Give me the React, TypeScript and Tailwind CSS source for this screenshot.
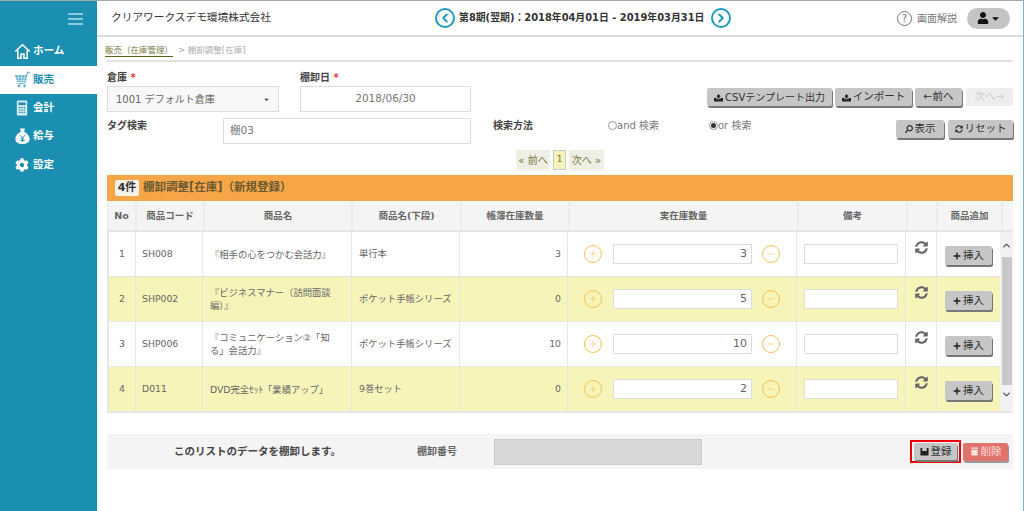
import { ChevronDown, ChevronLeft, ChevronRight, ChevronUp, Minus, Plus } from "lucide-react";
import { FaCaretDown, FaCog, FaPlus, FaSearch, FaSyncAlt, FaUser } from "react-icons/fa";
import { ReactNode } from "react";

const rows = [
  { no: 1, code: "SH008", name: "『相手の心をつかむ会話力』", sub: "単行本", book: 3, real: 3 },
  { no: 2, code: "SHP002", name: "『ビジネスマナー（訪問面談編）』", sub: "ポケット手帳シリーズ", book: 0, real: 5 },
  { no: 3, code: "SHP006", name: "『コミュニケーション②「知る」会話力』", sub: "ポケット手帳シリーズ", book: 10, real: 10 },
  { no: 4, code: "D011", name: "DVD完全ｾｯﾄ「業績アップ」", sub: "9巻セット", book: 0, real: 2 },
];

const headers = ["No", "商品コード", "商品名", "商品名(下段)", "帳簿在庫数量", "実在庫数量", "備考", "", "商品追加"];

function HomeIcon() {
  return (
    <svg viewBox="0 0 20 20" className="h-[17px] w-[17px]" fill="none" stroke="white" strokeWidth="1.8">
      <path d="M1.5 10 10 2l8.500 8" />
      <path d="M4.500 8.500V18h3.800v-5h3.400v5h3.800V8.500" />
    </svg>
  );
}

function CartIcon() {
  return (
    <svg viewBox="0 0 20 20" className="h-[17px] w-[17px]" fill="#58abc6">
      <path d="M1 5h14.500l-1.500 8H4z" />
      <path d="M5 5l1 8M9 5v8M12.500 5l-1 8M2 8h13M3 11h11" stroke="white" strokeWidth="0.700" />
      <path d="M15 5l1-3.500h3" fill="none" stroke="#58abc6" strokeWidth="1.200" />
      <path d="M5 14.500h8.500" fill="none" stroke="#58abc6" strokeWidth="1.200" />
      <circle cx="6" cy="17.500" r="1.500" />
      <circle cx="12.500" cy="17.500" r="1.500" />
    </svg>
  );
}

function CalcIcon() {
  return (
    <svg viewBox="0 0 14 20" className="h-[16px] w-[12px]">
      <rect x="0.500" y="0.500" width="13" height="19" rx="1.500" fill="#d7edf3" />
      <rect x="2.500" y="3" width="9" height="3.500" fill="#1a8fb1" />
      <path d="M3 9.500h2M6 9.500h2M9 9.500h2M3 12.500h2M6 12.500h2M9 12.500h2M3 15.500h2M6 15.500h2M9 15.500h2" stroke="#1a8fb1" strokeWidth="1.500" />
    </svg>
  );
}

function BagIcon() {
  return (
    <svg viewBox="0 0 18 20" className="h-[18px] w-[15px]">
      <path d="M6 1h6L10.800 5c3.700 1.500 6.700 5 6.700 8.500 0 4-3.500 6-8.500 6s-8.500-2-8.500-6C.5 10 3.500 6.500 7.200 5z" fill="white" />
      <path d="M6 9l3 3.500L12 9M9 12.500V17M6.500 13.500h5M6.500 15.500h5" stroke="#1a8fb1" strokeWidth="1.100" fill="none" />
    </svg>
  );
}

function ImportIcon() {
  return (
    <svg viewBox="0 0 10 10" className="h-[9px] w-[9px]" fill="#222">
      <path d="M5 1 7.500 4H6.200v2H3.800V4H2.500z" />
      <path d="M0 5.500h2.800v1.500h4.400V5.500H10V9.500H0z" />
    </svg>
  );
}

function FloppyIcon() {
  return (
    <svg viewBox="0 0 10 10" className="h-[9px] w-[9px]" fill="#222">
      <path d="M.5 1h2v3.500h5V1h2v8.500h-9z" />
    </svg>
  );
}

function BinIcon() {
  return (
    <svg viewBox="0 0 10 10" className="h-[9px] w-[9px]" fill="#fbe6e4">
      <path d="M1 .5h8v1.500H1zM1.500 3h7v6.500h-7z" />
    </svg>
  );
}

function NavItem({ icon, label, active }: { icon: ReactNode; label: string; active?: boolean }) {
  return (
    <div className={active ? "flex h-[28px] items-center bg-white pl-[11px] text-[#1a8fb1]" : "flex h-[28.500px] items-center pl-[11px] text-white"}>
      <span className="flex w-[22px] justify-center">{icon}</span>
      <span className="text-[10.500px] font-bold">{label}</span>
    </div>
  );
}

function GrayButton({ children, className }: { children: ReactNode; className: string }) {
  return (
    <button className={`flex items-center justify-center gap-[2px] rounded-[2px] bg-[#c6c6c6] text-[10.500px] text-[#333] shadow-[1px_2px_0_#777] ${className}`}>
      {children}
    </button>
  );
}

function RoundButton({ children }: { children: ReactNode }) {
  return (
    <span className="flex h-[18px] w-[18px] shrink-0 items-center justify-center rounded-full border-[1.500px] border-[#fbbf50] text-[#fbbf50]">
      {children}
    </span>
  );
}

function Scrollbar() {
  return (
    <div className="flex w-[13px] flex-col items-center bg-[#f1f1f1] text-[#555]">
      <ChevronUp size={11} strokeWidth={3} className="mt-[8px] shrink-0" />
      <div className="mt-[6px] h-[128px] w-[10px] bg-[#c8c8c8]" />
      <ChevronDown size={11} strokeWidth={3} className="mt-[4px] shrink-0" />
    </div>
  );
}

export default function App() {
  return (
    <div className="flex h-[511px] w-[1024px] overflow-hidden border-t border-t-[#a3a8aa] border-r border-r-[#7ab3d8] bg-white font-['DejaVu_Sans','Noto_Sans_CJK_JP',sans-serif] text-[#555]">
      <aside className="w-[97px] shrink-0 bg-[#1a8fb1]">
        <div className="flex h-[36px] items-start justify-end pr-[14px] pt-[12px]">
          <div className="flex w-[15px] flex-col gap-[3px]">
            <div className="h-[2px] bg-[#8ccbdc]" />
            <div className="h-[2px] bg-[#8ccbdc]" />
            <div className="h-[2px] bg-[#8ccbdc]" />
          </div>
        </div>
        <NavItem icon={<HomeIcon />} label="ホーム" />
        <NavItem icon={<CartIcon />} label="販売" active />
        <NavItem icon={<CalcIcon />} label="会計" />
        <NavItem icon={<BagIcon />} label="給与" />
        <NavItem icon={<FaCog size={14} />} label="設定" />
      </aside>

      <main className="flex min-w-0 flex-1 flex-col">
        <header className="flex h-[36px] shrink-0 items-center border-b-2 border-[#dcdcdc] pl-[14px] pr-[13px]">
          <div className="w-[324px] text-[10.700px] text-[#333]">クリアワークスデモ環境株式会社</div>
          <span className="flex h-[20px] w-[20px] items-center justify-center rounded-full border-2 border-[#1f9cba] text-[#1f9cba]">
            <ChevronLeft size={14} strokeWidth={3.500} />
          </span>
          <div className="ml-[4px] w-[252px] whitespace-nowrap text-[9.900px] font-bold text-[#333]">
            第8期(翌期)：2018年04月01日 - 2019年03月31日
          </div>
          <span className="flex h-[20px] w-[20px] items-center justify-center rounded-full border-2 border-[#1f9cba] text-[#1f9cba]">
            <ChevronRight size={14} strokeWidth={3.500} />
          </span>
          <span className="ml-auto flex h-[15px] w-[15px] items-center justify-center rounded-full border border-[#777] text-[10px] text-[#777]">?</span>
          <span className="ml-[5px] text-[10px] text-[#777]">画面解説</span>
          <span className="ml-[10px] flex h-[21px] w-[43px] items-center justify-center rounded-full bg-[#c4c4c4] text-[#111]">
            <FaUser size={12} />
            <FaCaretDown size={11} className="ml-[1px]" />
          </span>
        </header>

        <div className="flex flex-1 flex-col px-[10px]">
          <div className="flex h-[25px] shrink-0 items-center border-b-2 border-[#e2e2e2] text-[8.500px] text-[#aaa]">
            <span className="-ml-[2px] mt-[4px] border-b border-[#5e5e22] text-[#77773a]">販売（在庫管理）</span>
            <span className="ml-[5px] mt-[3px]">&gt; 棚卸調整[在庫]</span>
          </div>

          <div className="mt-[8px] flex h-[42px] shrink-0">
            <div className="w-[172px]">
              <div className="h-[16px] text-[10px] font-bold text-[#444]">
                倉庫 <span className="text-[#e23a2e]">*</span>
              </div>
              <div className="flex h-[26px] items-center justify-between border border-[#ddd] bg-[#f8f8f8] pl-[8px] pr-[8px] text-[10px] text-[#666]">
                1001 デフォルト倉庫
                <FaCaretDown size={7} className="text-[#333]" />
              </div>
            </div>
            <div className="ml-[21px] w-[171px]">
              <div className="h-[16px] text-[10px] font-bold text-[#444]">
                棚卸日 <span className="text-[#e23a2e]">*</span>
              </div>
              <div className="flex h-[26px] items-center justify-center border border-[#ddd] text-[10.500px] text-[#777]">2018/06/30</div>
            </div>
            <div className="ml-auto mt-[18px] flex h-[18px] gap-[3px]">
              <GrayButton className="w-[125px] text-[10px]"><ImportIcon />CSVテンプレート出力</GrayButton>
              <GrayButton className="w-[77px]"><ImportIcon />インポート</GrayButton>
              <GrayButton className="w-[47px]">←前へ</GrayButton>
              <button className="ml-[1px] w-[47px] rounded-[2px] bg-[#eee] text-[10.500px] text-[#ccc]">次へ→</button>
            </div>
          </div>

          <div className="mt-[6px] flex h-[26px] shrink-0">
            <div className="w-[116px] text-[10px] font-bold text-[#444]">タグ検索</div>
            <div className="flex w-[248px] items-center border border-[#ddd] pl-[6px] text-[10.500px] text-[#777]">棚03</div>
            <div className="ml-[22px] w-[115px] text-[10px] font-bold text-[#444]">検索方法</div>
            <div className="flex w-[101px] items-start text-[10px] text-[#777]">
              <span className="mt-[3px] h-[9px] w-[9px] rounded-full border border-[#999]" />
              and 検索
            </div>
            <div className="flex items-start text-[10px] text-[#777]">
              <span className="mt-[3px] flex h-[9px] w-[9px] items-center justify-center rounded-full border border-[#999]">
                <span className="h-[5px] w-[5px] rounded-full bg-[#333]" />
              </span>
              or 検索
            </div>
            <div className="ml-auto mt-[2px] flex h-[18px] gap-[4px]">
              <GrayButton className="w-[48px]"><FaSearch size={8} className="-scale-x-100" />表示</GrayButton>
              <GrayButton className="w-[65px]"><FaSyncAlt size={8} />リセット</GrayButton>
            </div>
          </div>

          <div className="mt-[6px] flex h-[20px] shrink-0 justify-center gap-[3px] text-[10px] text-[#77773a]">
            <span className="flex w-[34px] items-center justify-center bg-[#efefe6]">« 前へ</span>
            <span className="flex w-[13px] items-center justify-center border border-[#ccc] bg-[#f7f4b9] text-[9px]">1</span>
            <span className="flex w-[35px] items-center justify-center bg-[#efefe6]">次へ »</span>
          </div>

          <div className="mt-[5px] flex h-[26px] shrink-0 items-center bg-[#f6a647] pl-[8px] text-[11.500px] font-bold text-[#6b5a33]">
            <span className="mr-[4px] flex h-[16px] w-[24px] items-center justify-center rounded-[2px] bg-[#f4f1e8] text-[11px] text-[#333]">4件</span>
            棚卸調整[在庫]（新規登録）
          </div>

          <div className="grid h-[31px] shrink-0 grid-cols-[29px_68px_148px_109px_108px_229px_109px_30px_65px_11px] border-b-2 border-b-[#e6e6e6] border-l border-l-[#e6e6e6] border-t border-t-white bg-[#f4f4f4] text-[9.500px] font-bold text-[#666]">
            {headers.map((h, i) => (
              <div key={i} className="flex items-center justify-center border-r-2 border-[#ebebeb]">{h}</div>
            ))}
          </div>

          <div className="flex h-[181px] shrink-0 border-b-2 border-l-2 border-[#e6e6e6]">
            <div className="w-[891px]">
              {rows.map((r) => (
                <div
                  key={r.no}
                  className={`grid h-[45px] grid-cols-[27px_67px_149px_108px_108px_229px_109px_31px_63px] border-b border-[#e6e6e6] text-[9.300px] text-[#666] ${r.no % 2 === 0 ? "bg-[#f7f4b9]" : "bg-white"}`}
                >
                  <div className="flex items-center justify-center border-r border-[#e6e6e6]">{r.no}</div>
                  <div className="flex items-center border-r border-[#e6e6e6] pl-[6px]">{r.code}</div>
                  <div className="flex items-center border-r border-[#e6e6e6] pl-[7px] pr-[15px] leading-[13px]">{r.name}</div>
                  <div className="flex items-center whitespace-nowrap border-r border-[#e6e6e6] pl-[7px]">{r.sub}</div>
                  <div className="flex items-center justify-end border-r border-[#e6e6e6] pr-[6px]">{r.book}</div>
                  <div className="flex items-center border-r border-[#e6e6e6] pl-[16px]">
                    <RoundButton><Plus size={10} strokeWidth={1.500} /></RoundButton>
                    <div className="ml-[11px] flex h-[20px] w-[139px] items-center justify-end border border-[#ddd] bg-white pr-[4px] text-[11px]">{r.real}</div>
                    <div className="ml-[10px]"><RoundButton><Minus size={10} strokeWidth={1.500} /></RoundButton></div>
                  </div>
                  <div className="flex items-center justify-center border-r border-[#e6e6e6]">
                    <div className="h-[20px] w-[94px] border border-[#ddd] bg-white" />
                  </div>
                  <div className="flex justify-center border-r border-[#e6e6e6] pt-[9px] text-[#666]"><FaSyncAlt size={13} /></div>
                  <div className="flex items-start justify-center pt-[14px]">
                    <GrayButton className="h-[19px] w-[47px]"><FaPlus size={8} className="text-[#222]" />挿入</GrayButton>
                  </div>
                </div>
              ))}
            </div>
            <Scrollbar />
          </div>

          <div className="mt-[21px] flex h-[35px] shrink-0 items-center bg-[#f4f4f4]">
            <div className="ml-[67px] w-[243px] text-[10.500px] font-bold text-[#444]">このリストのデータを棚卸します。</div>
            <div className="w-[77px] text-[10px] font-bold text-[#666]">棚卸番号</div>
            <div className="h-[26px] w-[208px] border border-[#ccc] bg-[#d8d8d8]" />
            <div className="ml-[208px] flex h-[23px] w-[51px] items-center justify-center border-2 border-[#e00] bg-[#f4f4f4]">
              <GrayButton className="h-[17px] w-[43px]"><FloppyIcon />登録</GrayButton>
            </div>
            <button className="ml-[2px] flex h-[18px] w-[45px] items-center justify-center gap-[2px] rounded-[2px] bg-[#e2736c] text-[10.500px] text-[#fbdede] shadow-[1px_2px_0_#999]">
              <BinIcon />削除
            </button>
          </div>
        </div>
      </main>
    </div>
  );
}
